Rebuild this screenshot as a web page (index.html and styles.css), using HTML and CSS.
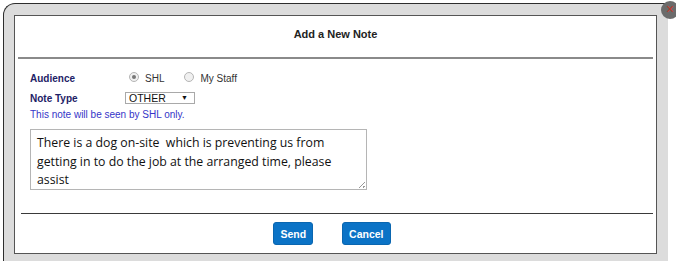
FILE: index.html
```html
<!DOCTYPE html>
<html lang="en">
<head>
    <meta charset="UTF-8">
    <title>Add a New Note</title>
    <link rel="stylesheet" href="styles.css">
</head>
<body>
    <div class="frame">
        <span class="close-btn">&times;</span>
        <div class="panel">
            <div class="header">Add a New Note</div>
            <div class="content">
                <div class="row">
                    <div class="label">Audience</div>
                    <label class="radio"><span class="dot checked"></span>SHL</label>
                    <label class="radio"><span class="dot"></span>My Staff</label>
                </div>
                <div class="row">
                    <div class="label">Note Type</div>
                    <div class="select">OTHER <span class="arrow">&#9660;</span></div>
                </div>
                <div class="info">This note will be seen by SHL only.</div>
                <div class="note-box">There is a dog on-site&nbsp; which is preventing us from<br>getting in to do the job at the arranged time, please<br>assist<span class="grip"></span></div>
            </div>
            <div class="footer">
                <button class="btn">Send</button>
                <button class="btn">Cancel</button>
            </div>
        </div>
    </div>
</body>
</html>
```

FILE: styles.css
```css
body {
    margin: 0;
    padding: 3px 0 0 3px;
    background-color: #ffffff;
    font-family: "Liberation Sans", Arial, sans-serif;
}
.frame {
    position: relative;
    width: 643px;
    background-color: #dcdcdc;
    border-top: 1px solid #2e2e2e;
    border-left: 1px solid #2e2e2e;
    border-top-left-radius: 12px;
    padding: 11px 11px 8px 10px;
}
.close-btn {
    position: absolute;
    top: -3px;
    right: -11px;
    width: 18px;
    height: 18px;
    border-radius: 50%;
    background-color: #6b6b6b;
    color: #c0392b;
    font-size: 14px;
    line-height: 16px;
    text-align: center;
}
.panel {
    background-color: #ffffff;
    border: 1px solid #555555;
}
.header {
    height: 41px;
    line-height: 36px;
    text-align: center;
    font-size: 11px;
    font-weight: bold;
    color: #222222;
    border-bottom: 2px solid #8a8a8a;
    margin: 0 3px;
}
.content {
    padding: 12px 15px 0 15px;
}
.row {
    display: flex;
    align-items: center;
    height: 14px;
    margin-bottom: 6px;
    font-size: 10px;
}
.label {
    width: 95px;
    font-weight: bold;
    color: #1e2266;
}
.radio {
    display: flex;
    align-items: center;
    color: #333333;
    margin-right: 16px;
    padding-left: 4px;
}
.dot {
    width: 8px;
    height: 8px;
    border: 1px solid #b5b5b5;
    border-radius: 50%;
    background-color: #f0f0f0;
    margin-right: 6px;
    margin-top: -3px;
    position: relative;
}
.dot.checked::after {
    content: "";
    position: absolute;
    left: 2px;
    top: 2px;
    width: 4px;
    height: 4px;
    border-radius: 50%;
    background-color: #777777;
}
.select {
    width: 62px;
    height: 10px;
    line-height: 10px;
    border: 1px solid #a9a9a9;
    padding: 0 3px;
    font-size: 10.5px;
    color: #111111;
    position: relative;
}
.arrow {
    position: absolute;
    right: 6px;
    top: 0;
    font-size: 7px;
}
.info {
    font-size: 10px;
    color: #3535c8;
    height: 14px;
    line-height: 12px;
    margin-top: -2px;
}
.note-box {
    position: relative;
    box-sizing: border-box;
    width: 337px;
    height: 61px;
    margin-top: 6px;
    border: 1px solid #b5b5b5;
    padding: 4px 6px;
    font-family: "Open Sans", "Liberation Sans", sans-serif;
    font-size: 12.3px;
    line-height: 18.5px;
    color: #111111;
}
.grip {
    position: absolute;
    right: 1px;
    bottom: 1px;
    width: 6px;
    height: 6px;
    background: linear-gradient(135deg, transparent 45%, #999 45%, #999 55%, transparent 55%, transparent 75%, #999 75%, #999 85%, transparent 85%);
}
.footer {
    margin: 23px 3px 0 6px;
    border-top: 1px solid #3a3a3a;
    padding: 8px 10px 8px 0;
    display: flex;
    justify-content: center;
    gap: 29px;
}
.btn {
    height: 23px;
    padding: 0 6px;
    font-family: "Liberation Sans", Arial, sans-serif;
    font-size: 10.5px;
    font-weight: bold;
    color: #ffffff;
    background-color: #0b73c6;
    border: 1px solid #0a66b0;
    border-radius: 3px;
}
```
